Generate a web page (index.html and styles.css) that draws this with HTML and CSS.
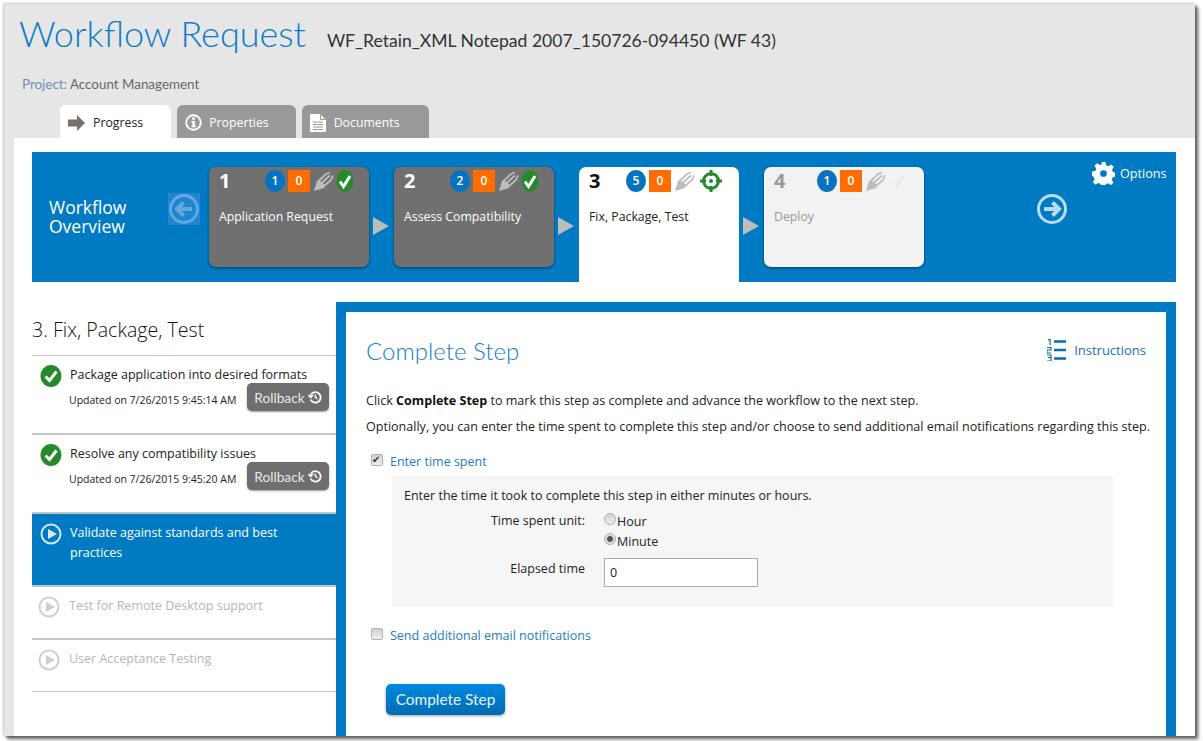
FILE: index.html
```html
<!DOCTYPE html>
<html>
<head>
<meta charset="utf-8">
<title>Workflow Request</title>
<link rel="stylesheet" href="styles.css">
</head>
<body>
<svg class="defs">
	<defs>
		<symbol id="feather" viewBox="0 0 20 20"><path d="M0 20 3 10 5 9 11 14 10 17z" fill="#bdbdbd"/><path d="M4 10.500 12 3 16 1.500M7.500 12 16 4.500M10 15 17 9 19 4.500" fill="none" stroke="#bdbdbd" stroke-width="1.800"/></symbol>
		<symbol id="check" viewBox="0 0 22 22"><ellipse cx="11" cy="11" rx="10.500" ry="11" fill="#26892a"/><path d="M5.500 11.500 9.500 15.500 16.500 6.500" fill="none" stroke="#fff" stroke-width="3"/></symbol>
		<symbol id="check_tall" viewBox="0 0 18 22"><ellipse cx="9" cy="11" rx="8.500" ry="11" fill="#26892a"/><path d="M4 11.500 7.500 16.500 14 6" fill="none" stroke="#fff" stroke-width="3"/></symbol>
		<symbol id="play" viewBox="0 0 22 22"><circle cx="11" cy="11" r="9.500" fill="none" stroke="currentColor" stroke-width="2"/><path d="M8 6 17 11 8 16z" fill="currentColor"/></symbol>
		<symbol id="history" viewBox="0 0 16 16"><path d="M3.500 5A6 6 0 1 1 3 11" fill="none" stroke="#fff" stroke-width="2"/><path d="M0 6H6L3 9.500zM8 4.500V8.500L11 10.500" fill="#fff" stroke="#fff" stroke-width=".8"/></symbol>
	</defs>
</svg>
<div class="window">
	<div class="header">
		<div class="title_row">
			<h1>Workflow Request</h1>
			<span class="wf_name">WF_Retain_XML Notepad 2007_150726-094450 (WF 43)</span>
		</div>
		<div class="project"><span>Project:</span> Account Management</div>
		<ul class="tabs">
			<li class="tab active">
				<svg width="17" height="16" viewBox="0 0 17 16"><path d="M0 4.500H9V0L17 8 9 16V11.500H0z" fill="#7a7068"/></svg>
				Progress
			</li>
			<li class="tab">
				<svg width="17" height="17" viewBox="0 0 18 18"><circle cx="9" cy="9" r="7.700" fill="none" stroke="#fff" stroke-width="2"/><path d="M7.500 3.800h3v2.400h-3zM6.800 7.500h3.700v5h1v1.500H6.800v-1.500h1v-3.500h-1z" fill="#fff"/></svg>
				Properties
			</li>
			<li class="tab">
				<svg width="16" height="18" viewBox="0 0 16 18"><path d="M0 0H10L16 6V18H0z" fill="#fff"/><path d="M10.500 .5V5.500H15.500M3 8H13M3 10.500H13M3 13H13M3 15.500H13" fill="none" stroke="#999"/></svg>
				Documents
			</li>
		</ul>
	</div>

	<div class="content">
		<div class="overview">
			<div class="overview_title">Workflow<br>Overview</div>
			<div class="prev">
				<svg width="32" height="32" viewBox="0 0 32 32"><circle cx="16" cy="16" r="13.500" fill="none" stroke="#5fa9dc" stroke-width="3"/><path d="M24 16H10M15.500 9.500 9 16l6.500 6.500" fill="none" stroke="#5fa9dc" stroke-width="4"/></svg>
			</div>

			<div class="card done">
				<div class="card_top">
					<span class="num">1</span>
					<span class="badges">
						<b class="count">1</b><b class="zero">0</b>
						<svg class="feather"><use href="#feather"/></svg>
						<svg class="ok"><use href="#check_tall"/></svg>
					</span>
				</div>
				<div class="card_name">Application Request</div>
			</div>
			<div class="step_arrow"></div>
			<div class="card done">
				<div class="card_top">
					<span class="num">2</span>
					<span class="badges">
						<b class="count">2</b><b class="zero">0</b>
						<svg class="feather"><use href="#feather"/></svg>
						<svg class="ok"><use href="#check_tall"/></svg>
					</span>
				</div>
				<div class="card_name">Assess Compatibility</div>
			</div>
			<div class="step_arrow"></div>
			<div class="card current">
				<div class="card_top">
					<span class="num">3</span>
					<span class="badges">
						<b class="count">5</b><b class="zero">0</b>
						<svg class="feather"><use href="#feather"/></svg>
						<svg class="target" width="22" height="22" viewBox="0 0 22 22"><circle cx="11" cy="11" r="7.500" fill="none" stroke="#26892a" stroke-width="3"/><circle cx="11" cy="11" r="2" fill="#26892a"/><path d="M11 0V6M11 16V22M0 11H6M16 11H22" stroke="#26892a" stroke-width="3"/></svg>
					</span>
				</div>
				<div class="card_name">Fix, Package, Test</div>
			</div>
			<div class="step_arrow"></div>
			<div class="card todo">
				<div class="card_top">
					<span class="num">4</span>
					<span class="badges">
						<b class="count">1</b><b class="zero">0</b>
						<svg class="feather"><use href="#feather"/></svg>
						<svg class="faint" width="12" height="12" viewBox="0 0 12 12"><path d="M1 7 4 10.500 11 1" fill="none" stroke="#e6e6e6" stroke-width="1.500"/></svg>
					</span>
				</div>
				<div class="card_name">Deploy</div>
			</div>

			<div class="next">
				<svg width="32" height="32" viewBox="0 0 32 32"><circle cx="16" cy="16" r="13.500" fill="none" stroke="#b9dcf1" stroke-width="3"/><path d="M8 16H22M16.500 9.500 23 16l-6.500 6.500" fill="none" stroke="#b9dcf1" stroke-width="4"/></svg>
			</div>
			<div class="options">
				<svg width="23" height="23" viewBox="0 0 24 24"><path d="M10 0h4l.7 3.400 2.400 1 2.900-1.900 2.800 2.800-1.900 2.900 1 2.400 3.100.7v4l-3.400.7-1 2.400 1.900 2.900-2.800 2.800-2.900-1.900-2.400 1-.7 3.100h-4l-.7-3.400-2.400-1-2.900 1.900-2.800-2.800 1.900-2.900-1-2.400L0 14v-4l3.400-.7 1-2.400-1.900-2.900 2.800-2.800 2.900 1.900 2.400-1zM12 8.500a3.500 3.500 0 1 0 0 7 3.500 3.500 0 0 0 0-7z" fill="#fff" fill-rule="evenodd"/></svg>
				Options
			</div>
		</div>

		<div class="lower">
			<div class="steps">
				<h2>3. Fix, Package, Test</h2>
				<div class="step">
					<div class="step_text"><svg class="step_icon"><use href="#check"/></svg>Package application into desired formats</div>
					<div class="step_meta">
						<span>Updated on 7/26/2015 9:45:14 AM</span>
						<a class="rollback">Rollback <svg width="14" height="14" viewBox="0 0 16 16"><use href="#history"/></svg></a>
					</div>
				</div>
				<div class="step second">
					<div class="step_text"><svg class="step_icon"><use href="#check"/></svg>Resolve any compatibility issues</div>
					<div class="step_meta">
						<span>Updated on 7/26/2015 9:45:20 AM</span>
						<a class="rollback">Rollback <svg width="14" height="14" viewBox="0 0 16 16"><use href="#history"/></svg></a>
					</div>
				</div>
				<div class="step running">
					<div class="step_text"><svg class="step_icon"><use href="#play"/></svg><span>Validate against standards and best practices</span></div>
				</div>
				<div class="step waiting">
					<div class="step_text"><svg class="step_icon"><use href="#play"/></svg>Test for Remote Desktop support</div>
				</div>
				<div class="step waiting">
					<div class="step_text"><svg class="step_icon"><use href="#play"/></svg>User Acceptance Testing</div>
				</div>
			</div>

			<div class="panel">
				<div class="panel_head">
					<h3>Complete Step</h3>
					<a class="instructions">
						<svg width="20" height="22" viewBox="0 0 20 22"><path d="M7 2.500H19M7 11H19M7 19.500H19" stroke="#0a6cb4" stroke-width="2.500"/><path d="M1 1 3 0V6M0 8.500H4V11H0V14H4M0 16H4V18.500H1M4 18.500V22H0" fill="none" stroke="#0a6cb4" stroke-width="1.200"/></svg>
						Instructions
					</a>
				</div>
				<p class="intro">Click <b>Complete Step</b> to mark this step as complete and advance the workflow to the next step.</p>
				<p class="intro">Optionally, you can enter the time spent to complete this step and/or choose to send additional email notifications regarding this step.</p>

				<label class="check_row"><input type="checkbox" checked> Enter time spent</label>
				<div class="time_box">
					<div>Enter the time it took to complete this step in either minutes or hours.</div>
					<div class="form_row">
						<span class="form_label">Time spent unit:</span>
						<div class="radios">
							<label><input type="radio" name="unit">Hour</label>
							<label><input type="radio" name="unit" checked>Minute</label>
						</div>
					</div>
					<div class="form_row elapsed">
						<span class="form_label">Elapsed time</span>
						<input class="time_input" type="text" value="0">
					</div>
				</div>
				<label class="check_row send"><input type="checkbox"> Send additional email notifications</label>
				<button class="complete">Complete Step</button>
			</div>
		</div>
	</div>
</div>
</body>
</html>
```

FILE: styles.css
```css
html, body { margin: 0; height: 741px; overflow: hidden; background: #fff; }
body { font: 13px "Open Sans", "Liberation Sans", sans-serif; color: #222; }
ul { margin: 0; padding: 0; list-style: none; }
h1, h2, h3, p { margin: 0; font-weight: normal; }
.defs { display: none; }

.window { height: 732px; margin: 4px 8px 0 4px; background: #e6e6e6; box-shadow: 2px 2px 3px #555, 4px 4px 3px #bbb, -1px -1px 2px #ccc; overflow: hidden; }

/* header */
.header { height: 134px; box-sizing: border-box; padding: 7px 0 0 15px; }
.title_row { display: flex; align-items: baseline; height: 46px; }
h1 { font: 300 36px Lato, sans-serif; color: #0b7cc9; margin-right: 21px; }
.wf_name { font: 17.570px Lato, sans-serif; color: #333; }
.project { margin: 19px 0 0 3px; height: 29px; font: 13.400px Lato, sans-serif; color: #666; }
.project span { color: #6f8fb5; }

.tabs { display: flex; gap: 6px; margin: 0 0 0 41px; }
.tab { height: 33px; box-sizing: border-box; padding: 2px 28px 0 8px; display: flex; align-items: center; gap: 7px; background: #999; color: #fff; border-radius: 6px 6px 0 0; font-size: 12.300px; }
.tab.active { background: #fff; color: #222; gap: 8px; }
.tab:nth-child(2) { padding-right: 27px; }
.tab:nth-child(3) { padding-right: 29px; gap: 8px; }

/* main area */
.content { height: 598px; margin-left: 10px; background: #fff; padding: 14px 19px 0 18px; }

.overview { height: 130px; background: #007ac3; display: flex; color: #fff; box-sizing: border-box; padding-top: 15px; }
.overview_title { width: 136px; padding: 31px 0 0 17px; box-sizing: border-box; font-size: 17.500px; line-height: 19px; }
.prev { width: 32px; height: 32px; margin: 26px 9px 0 0; background: rgba(80,150,230,.4); outline: 1px solid #2f80dd; outline-offset: -1px; }

.card { width: 160px; height: 100px; box-sizing: border-box; padding: 3px 15px 0 10px; border-radius: 7px; box-shadow: 0 1px 3px rgba(0,0,0,.5); }
.card.done { background: #707070; color: #fff; }
.card.current { background: #fff; color: #222; height: 115px; border-radius: 7px 7px 0 0; box-shadow: none; padding-right: 17px; }
.card.todo { background: #f2f2f2; color: #999; }
.card_top { display: flex; justify-content: space-between; align-items: center; height: 22px; }
.num { font-size: 20px; font-weight: bold; line-height: 22px; }
.card.current .num { color: #111; }
.badges { display: flex; align-items: center; }
.badges b { display: block; color: #fff; font-size: 12px; font-weight: 600; text-align: center; line-height: 22px; }
.count { width: 20px; height: 22px; border-radius: 50%; background: #0772c0; }
.zero { width: 22px; height: 22px; background: #ff6c00; margin-left: 3px; }
.feather { width: 20px; height: 20px; margin-left: 4px; }
.ok { width: 18px; height: 22px; margin-left: 2px; }
.target { margin-left: 5px; }
.faint { margin: 0 4px 0 7px; }
.card_name { margin-top: 16px; font-size: 12.300px; line-height: 18px; }
.card.done .card_name { font-weight: 500; }

.step_arrow { width: 25px; height: 18px; align-self: flex-start; margin-top: 50px; }
.step_arrow::before { content: ""; display: block; margin-left: 4px; width: 0; border-left: 16px solid #bdbdbd; border-top: 9px solid transparent; border-bottom: 9px solid transparent; }

.next { margin: 26px 0 0 112px; width: 32px; height: 32px; }
.options { display: flex; align-items: center; gap: 5px; height: 23px; margin: -5px 0 0 24px; font-size: 12.600px; }

.lower { display: flex; margin-top: 20px; }
.steps { width: 304px; }
h2 { font-size: 19.600px; font-weight: 300; height: 53px; line-height: 56px; box-sizing: border-box; color: #111; }

.step { border-top: 1px solid #c4c4c4; height: 78px; box-sizing: border-box; padding: 9px 7px 0 8px; }
.step.second { border-top-width: 2px; height: 79px; }
.step_text { display: flex; align-items: flex-start; font-size: 12.500px; line-height: 20px; }
.step_icon { flex: none; width: 22px; height: 22px; margin-right: 8px; }
.step_meta { display: flex; justify-content: space-between; align-items: flex-start; margin-top: -4px; padding-left: 29px; font-size: 10.500px; }
.step_meta span { margin-top: 10px; }
.rollback { width: 82px; height: 28px; box-sizing: border-box; display: flex; align-items: center; justify-content: center; gap: 3px; background: #6e6e6e; color: #e8e8e8; border-radius: 5px; box-shadow: 0 1px 2px rgba(0,0,0,.4); font: 13.700px Lato, sans-serif; }

.step.running { border-top: 2px solid #c4c4c4; height: 73px; background: #007ac3; color: #fff; }
.step.running .step_icon { color: #d8e8f2; }
.step.waiting { border-top: 2px solid #c4c4c4; height: 53px; color: #b5b5b5; padding-left: 6px; }
.step.waiting + .step.waiting { border-bottom: 1px solid #c4c4c4; height: 54px; }
.step.waiting .step_icon { color: #cfcfcf; margin-right: 9px; }

.panel { flex: 1; height: 450px; border: 10px solid #007ac3; border-bottom: 0; box-sizing: border-box; padding: 0 10px 0 20px; }
.panel_head { display: flex; justify-content: space-between; align-items: center; height: 76px; padding-right: 10px; }
h3 { font: 300 24px Lato, sans-serif; color: #1a7cc4; }
.instructions { display: flex; align-items: center; gap: 7px; font-size: 13px; color: #1a6fb5; }
.intro { font-size: 12.550px; line-height: 26px; }
.intro b { color: #111; }

.check_row { display: flex; align-items: center; gap: 7px; margin-top: 11px; padding-left: 5px; height: 20px; color: #1a7cc4; font-size: 12.500px; }
.check_row input, .radios input { appearance: none; margin: 0; background: linear-gradient(#d0d0d0, #f0f0f0); border: 1px solid #b0b0b0; box-sizing: border-box; }
.check_row input { width: 12px; height: 12px; border-radius: 2px; display: block; margin-top: -3px; }
.check_row input:checked::before { content: "\2714"; display: block; font: 10px/10px "DejaVu Sans", sans-serif; color: #333; }

.time_box { margin: 5px 0 0 26px; width: 721px; height: 131px; box-sizing: border-box; padding: 11px 12px; background: #f6f6f6; font-size: 12.500px; line-height: 18px; }
.form_row { display: flex; gap: 19px; }
.form_label { width: 181px; text-align: right; }
.radios { display: flex; flex-direction: column; }
.radios label { display: flex; align-items: flex-start; height: 20px; line-height: 20px; }
.radios input { width: 12px; height: 12px; border-radius: 50%; margin: 1px 1px 0 0; }
.radios input:checked { background: radial-gradient(circle, #555 0 2.500px, #ddd 3.500px); }
.form_row:nth-child(2) { margin-top: 7px; }
.elapsed { padding-top: 6px; }
.elapsed .form_label { padding-top: 2px; }
.time_input { width: 154px; height: 29px; box-sizing: border-box; border: 1px solid #aaa; padding: 0 5px; background: #fff; font: 12.500px "Open Sans", sans-serif; color: #222; }

.check_row.send { margin-top: 18px; }
.complete { display: block; margin: 39px 0 0 20px; width: 119px; height: 31px; padding: 0 0 2px; border: 0; border-radius: 5px; background: linear-gradient(#0088e0, #006cb2); box-shadow: 0 1px 3px rgba(0,0,0,.4); color: #e8f3fb; font: 15.400px Lato, sans-serif; }
```
